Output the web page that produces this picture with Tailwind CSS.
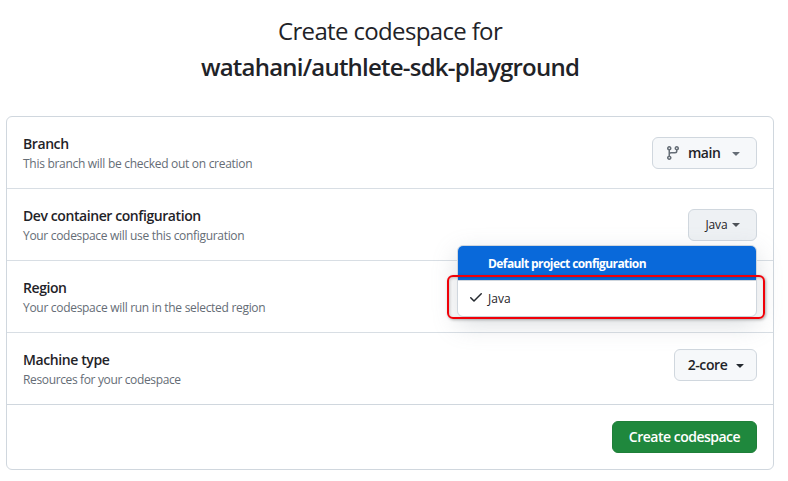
<!DOCTYPE html>
<html lang="en">
<head>
<meta charset="utf-8">
<title>Create codespace</title>
<script src="https://cdn.jsdelivr.net/npm/@tailwindcss/browser@4"></script>
</head>
<body class="w-[788px] h-[481px] overflow-hidden bg-white text-[#1f2328] font-['Open_Sans','Noto_Sans',sans-serif]">
<main class="relative pl-[6px] pr-[14px] pt-[13px]">
  <h1 class="h-[103px] text-center text-[24px] leading-[36px]">
    <span class="block whitespace-nowrap tracking-[-0.65px]">Create codespace for</span>
    <span class="block whitespace-nowrap font-semibold tracking-[-0.78px]">watahani/authlete-sdk-playground</span>
  </h1>
  <section class="h-[354px] rounded-md border border-[#d0d7de]">
    <div class="flex h-[72px] items-center justify-between border-b border-[#d8dee4] px-4">
      <div class="pt-px">
        <h2 class="text-[14px] leading-[21px] font-semibold tracking-[-0.42px]">Branch</h2>
        <p class="text-[12px] leading-[19px] tracking-[-0.29px] text-[#656d76]">This branch will be checked out on creation</p>
      </div>
      <button class="flex h-8 w-[105px] items-center rounded-md border border-[#d0d7de] bg-[#f6f8fa] pl-[12px] text-[14px] font-semibold">
        <svg class="size-4 fill-[#656d76]" viewBox="0 0 16 16"><path d="M9.5 3.25a2.25 2.25 0 1 1 3 2.122V6A2.5 2.5 0 0 1 10 8.5H6a1 1 0 0 0-1 1v1.128a2.251 2.251 0 1 1-1.5 0V5.372a2.25 2.25 0 1 1 1.5 0v1.836A2.493 2.493 0 0 1 6 7h4a1 1 0 0 0 1-1v-.628A2.25 2.25 0 0 1 9.5 3.25Zm-6 0a.75.75 0 1 0 1.5 0 .75.75 0 0 0-1.5 0Zm8.25-.75a.75.75 0 1 0 0 1.5.75.75 0 0 0 0-1.5ZM4.25 12a.75.75 0 1 0 0 1.500.75.75 0 0 0 0-1.500Z"/></svg>
        <span class="ml-[7px] w-[32px] whitespace-nowrap tracking-[-0.5px]">main</span>
        <svg class="ml-[8px] size-4 fill-[#656d76]" viewBox="0 0 16 16"><path d="m4.427 7.427 3.396 3.396a.25.25 0 0 0 .354 0l3.396-3.396A.25.25 0 0 0 11.396 7H4.604a.25.25 0 0 0-.177.427Z"/></svg>
      </button>
    </div>
    <div class="flex h-[72px] items-center justify-between border-b border-[#d8dee4] px-4">
      <div class="pt-px">
        <h2 class="text-[14px] leading-[21px] font-semibold tracking-[-0.42px]">Dev container configuration</h2>
        <p class="text-[12px] leading-[19px] tracking-[-0.31px] text-[#656d76]">Your codespace will use this configuration</p>
      </div>
      <button class="flex h-8 w-[69px] items-center rounded-md border border-[#d0d7de] bg-[#eef1f4] pl-[16px] text-[12px] font-medium">
        <span class="w-[23px] whitespace-nowrap pt-px tracking-[-0.1px]">Java</span>
        <i class="ml-[4px] border-x-4 border-t-4 border-x-transparent border-t-[#4c5157]"></i>
      </button>
    </div>
    <div class="flex h-[72px] items-center justify-between border-b border-[#d8dee4] px-4">
      <div class="pt-px">
        <h2 class="text-[14px] leading-[21px] font-semibold tracking-[-0.42px]">Region</h2>
        <p class="text-[12px] leading-[19px] tracking-[-0.3px] text-[#656d76]">Your codespace will run in the selected region</p>
      </div>
    </div>
    <div class="flex h-[72px] items-center justify-between border-b border-[#d0d7de] px-4">
      <div class="pt-px">
        <h2 class="text-[14px] leading-[21px] font-semibold tracking-[-0.4px]">Machine type</h2>
        <p class="text-[12px] leading-[19px] tracking-[-0.36px] text-[#656d76]">Resources for your codespace</p>
      </div>
      <button class="mb-2 flex h-8 w-[83px] items-center rounded-md border border-[#d0d7de] bg-[#f6f8fa] pl-[12px] text-[14px] font-semibold">
        <span class="w-[41px] whitespace-nowrap tracking-[-0.4px]">2-core</span>
        <svg class="ml-[4px] size-4 fill-[#24292f]" viewBox="0 0 16 16"><path d="m4.427 7.427 3.396 3.396a.25.25 0 0 0 .354 0l3.396-3.396A.25.25 0 0 0 11.396 7H4.604a.25.25 0 0 0-.177.427Z"/></svg>
      </button>
    </div>
    <div class="flex h-16 items-center justify-end px-4">
      <button class="h-8 w-[145px] whitespace-nowrap rounded-md border border-[#1f7f39] bg-[#1f883d] pb-[2px] text-[14px] font-semibold tracking-[-0.5px] text-white">Create codespace</button>
    </div>
  </section>
  <div class="absolute left-[457px] top-[245px] h-[72px] w-[300px] overflow-hidden rounded-md border border-[#d0d7de] bg-white text-[12px] shadow-[0_8px_24px_rgba(140,149,159,0.3)]">
    <div class="flex h-[35px] items-center border-b border-[#d0d7de] bg-[#0969da] pl-[30px] pt-[2px] font-bold text-white"><span class="whitespace-nowrap tracking-[-0.58px]">Default project configuration</span></div>
    <div class="flex h-[35px] items-center pl-[10px]">
      <svg class="mb-[3px] size-4 fill-[#24292f]" viewBox="0 0 16 16"><path d="M13.78 4.22a.75.75 0 0 1 0 1.060l-7.250 7.250a.75.75 0 0 1-1.060 0L2.220 9.280a.751.751 0 0 1 .018-1.042.751.751 0 0 1 1.042-.018L6 10.940l6.720-6.720a.75.75 0 0 1 1.060 0Z"/></svg>
      <span class="ml-[4px] whitespace-nowrap font-medium tracking-[0px]">Java</span>
    </div>
  </div>
  <div class="absolute left-[447px] top-[275px] h-[44px] w-[318px] rounded-[6px] border-2 border-[#f00008] shadow-[1px_1px_3px_rgba(0,0,0,0.3),inset_1px_1px_3px_rgba(0,0,0,0.2)]"></div>
</main>
</body>
</html>
